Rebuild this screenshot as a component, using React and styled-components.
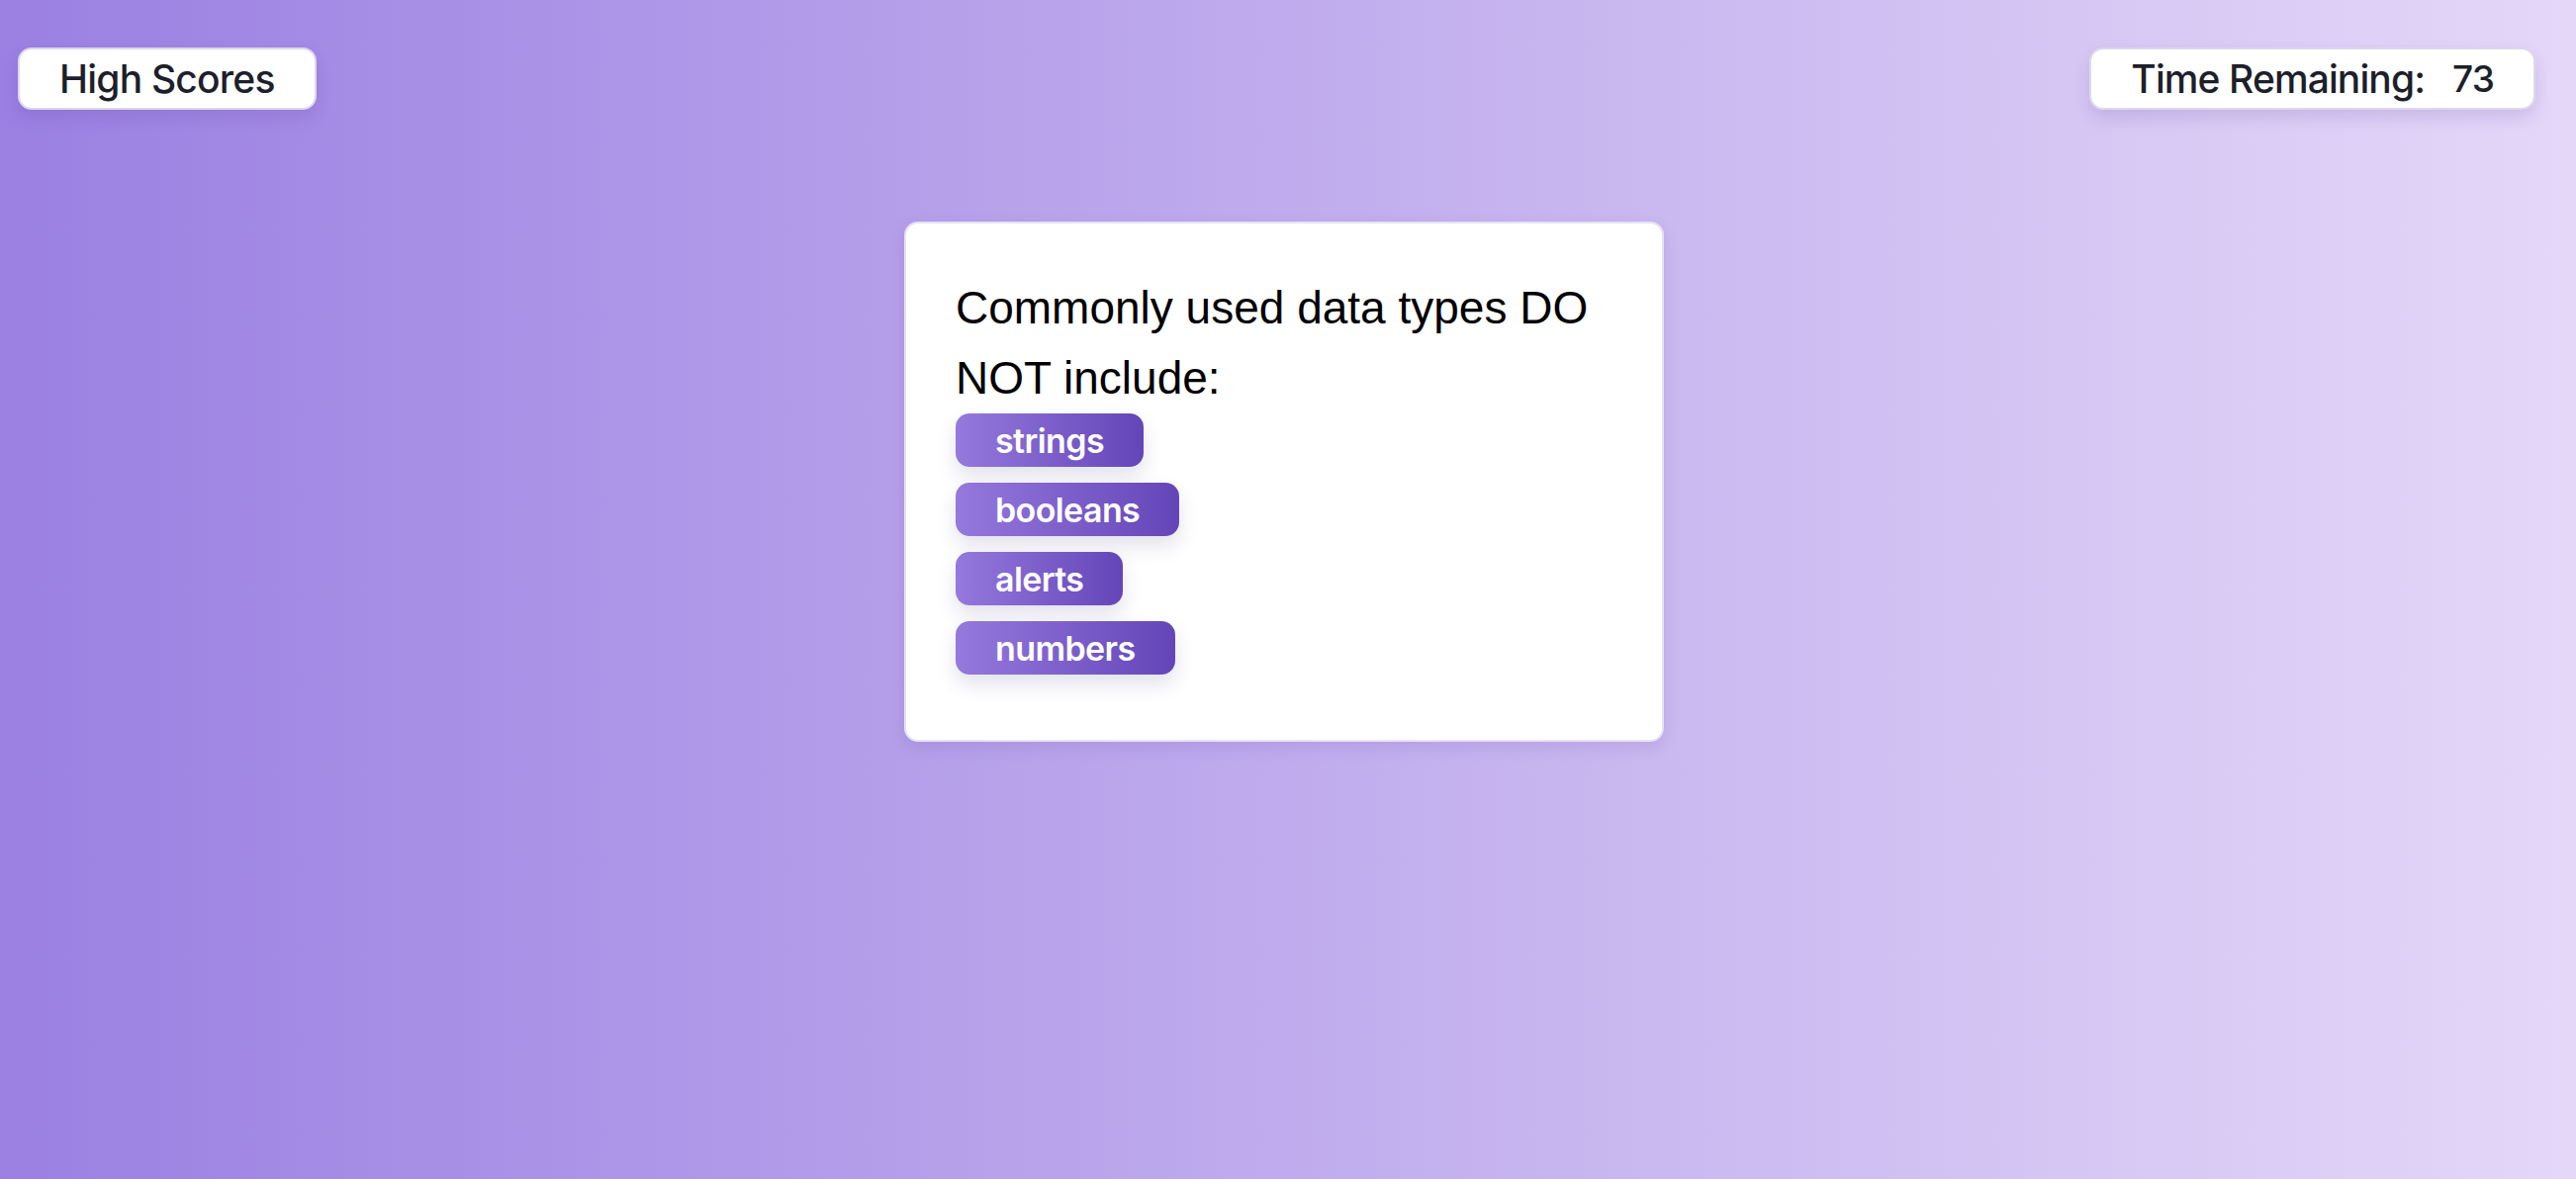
import React from 'react';
import styled, { createGlobalStyle } from 'styled-components';

const GlobalStyle = createGlobalStyle`
  html, body {
    margin: 0;
    padding: 0;
  }
  body {
    min-height: 100vh;
    background: linear-gradient(to right, #9b80e2 0%, #e4d7f8 100%);
    font-family: Inter, "Noto Sans", sans-serif;
  }
`;

const choices = ['strings', 'booleans', 'alerts', 'numbers'];

export default function App() {
  return (
    <Page>
      <GlobalStyle />
      <TopBar>
        <PillButton>High Scores</PillButton>
        <Timer>
          <span>Time Remaining:</span>
          <TimeValue>73</TimeValue>
        </Timer>
      </TopBar>

      <QuizCard>
        <Question>Commonly used data types DO NOT include:</Question>
        <ChoiceList>
          {choices.map((c) => (
            <Choice key={c}>{c}</Choice>
          ))}
        </ChoiceList>
      </QuizCard>
    </Page>
  );
}

const Page = styled.div`
  min-height: 100vh;
  display: flex;
  flex-direction: column;
  align-items: center;
  padding-right: 8px;
`;

const TopBar = styled.header`
  align-self: stretch;
  display: flex;
  justify-content: space-between;
  align-items: center;
  padding: 48px 33px 0 18px;
`;

const PillButton = styled.button`
  height: 63px;
  padding: 0 40px;
  background: #fff;
  border: 2px solid #dcd8ec;
  border-radius: 14px;
  box-shadow: 0 8px 16px rgba(80, 50, 150, 0.15);
  color: #1d1f2b;
  font-family: Inter, "Noto Sans", sans-serif;
  font-size: 39px;
  font-weight: 500;
  letter-spacing: -0.8px;
  cursor: pointer;
`;

const Timer = styled.div`
  height: 63px;
  box-sizing: border-box;
  display: flex;
  align-items: center;
  gap: 28px;
  padding: 0 40px;
  background: #fff;
  border: 2px solid #dcd8ec;
  border-radius: 14px;
  box-shadow: 0 8px 16px rgba(80, 50, 150, 0.15);
  color: #1d1f2b;
  font-size: 39px;
  font-weight: 500;
  letter-spacing: -0.9px;
`;

const TimeValue = styled.span`
  font-size: 37px;
`;

const QuizCard = styled.main`
  margin-top: 113px;
  width: 768px;
  box-sizing: border-box;
  padding: 50px 50px 50px;
  background: #fff;
  border: 2px solid #e6e2f2;
  border-radius: 14px;
  box-shadow: 0 6px 16px rgba(80, 50, 150, 0.12);
`;

const Question = styled.h2`
  margin: 0;
  font-family: "Liberation Sans", Arial, sans-serif;
  font-size: 46px;
  font-weight: 400;
  line-height: 71px;
  color: #000;
`;

const ChoiceList = styled.div`
  display: flex;
  flex-direction: column;
  align-items: flex-start;
`;

const Choice = styled.button`
  height: 54px;
  margin-bottom: 16px;
  padding: 0 40px;
  border: none;
  border-radius: 14px;
  background: linear-gradient(to right, #9579dd, #6445b8);
  box-shadow: 0 10px 20px rgba(60, 40, 110, 0.14);
  color: #fff;
  font-family: Inter, "Noto Sans", sans-serif;
  font-size: 34px;
  font-weight: 600;
  letter-spacing: -0.6px;
  cursor: pointer;
`;
